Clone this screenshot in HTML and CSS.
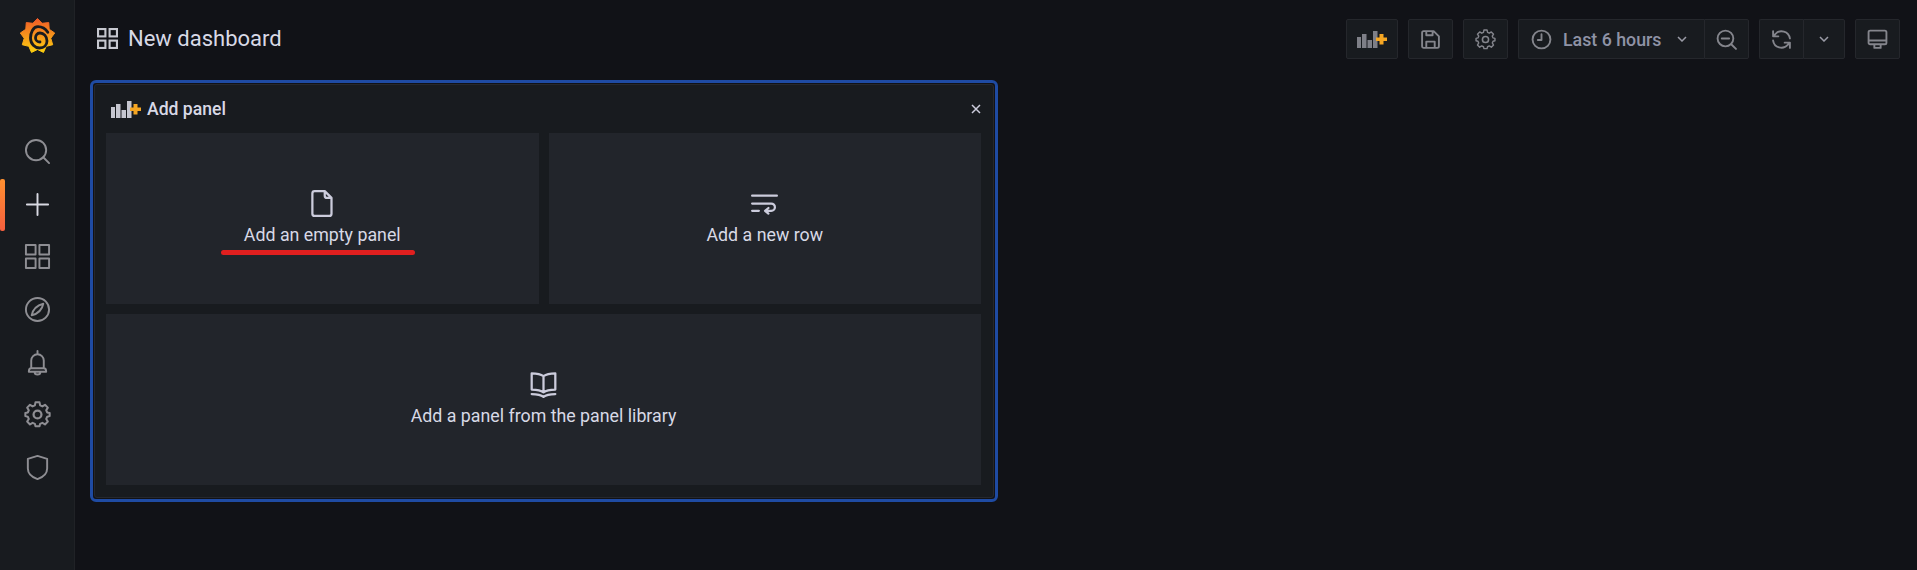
FILE: index.html
```html
<!DOCTYPE html>
<html lang="en">

<head>
    <meta charset="UTF-8">
    <meta name="viewport" content="width=device-width, initial-scale=1.0">
    <title>New dashboard - Grafana</title>
    <link rel="stylesheet" href="styles.css">
</head>

<body>
    <svg width="0" height="0" class="defs">
        <defs>
            <linearGradient id="logoGrad" x1="0" y1="1" x2="0" y2="0">
                <stop offset="0" stop-color="#fcd00f" />
                <stop offset="1" stop-color="#f05a28" />
            </linearGradient>
            <symbol id="addPanel" viewBox="0 0 30 17">
                <rect x="0" y="6" width="4" height="11" fill="currentColor" />
                <rect x="5" y="3" width="4.500" height="14" fill="currentColor" />
                <rect x="10.500" y="9" width="4.500" height="8" fill="currentColor" />
                <rect x="16" y="0" width="4.500" height="17" fill="currentColor" />
                <path d="M22.500 3h4v3.500H30v3.500h-3.500v3.500h-4V10H19V6.500h3.500z" fill="#f5a623" />
            </symbol>
            <symbol id="gear" viewBox="0 0 24 24">
                <path d="M10 2h4l.6 3 2.200 1 2.600-1.600 2.800 2.800L20.600 9.800l1 2.200 2.400.6v3l-2.400.6-1 2.200 1.600 2.600-2.800 2.800-2.600-1.600-2.200 1-.6 2.400h-4l-.6-2.400-2.200-1-2.600 1.600-2.800-2.800 1.600-2.600-1-2.200L0 15.600v-3l2.400-.6 1-2.200L1.800 7.200l2.800-2.800 2.600 1.600 2.200-1z" transform="translate(1.200 -.6) scale(.9)" />
                <circle cx="12" cy="12" r="3.500" />
            </symbol>
        </defs>
    </svg>

    <div class="app">
        <nav class="sidebar">
            <a class="logo" href="#">
                <svg width="35" height="36" viewBox="0 0 35 36">
                    <path fill="url(#logoGrad)" stroke="url(#logoGrad)" stroke-linejoin="round" d="M17.500 .5L22.100 5.300 28.750 4.600 29.200 11.250 34.700 15 30.800 20.300 32.700 26.750 26.200 28.300 23.500 34.400 17.500 31.500 11.500 34.400 8.800 28.300 2.300 26.750 4.200 20.300 .3 15 5.800 11.250 6.250 4.600 12.900 5.300z" />
                    <path fill="none" stroke="#181b1f" stroke-width="2.800" stroke-linecap="round" d="M27.800 14.300C25 10 21 8.700 18 8.700 13 8.700 10.500 15 10.500 20 10.500 26 15 30 19.500 30 24 30 27 27 27 23 27 18 23.500 15 20 15 17 15 15.500 17.500 15.500 20 15.500 22 17.500 24 20 24" />
                </svg>
            </a>
            <ul class="nav-list">
                <li>
                    <svg class="nav-icon" viewBox="0 0 28 28">
                        <circle cx="12.500" cy="12.500" r="10.500" />
                        <path d="M20 20l6 6" />
                    </svg>
                </li>
                <li class="current">
                    <svg class="nav-icon" viewBox="0 0 28 28">
                        <path d="M14 3v22M3 14h22" />
                    </svg>
                </li>
                <li>
                    <svg class="nav-icon" viewBox="0 0 28 28">
                        <rect x="2" y="2" width="10" height="10" />
                        <rect x="16" y="2" width="10" height="10" />
                        <rect x="2" y="16" width="10" height="10" />
                        <rect x="16" y="16" width="10" height="10" />
                    </svg>
                </li>
                <li>
                    <svg class="nav-icon" viewBox="0 0 28 28">
                        <circle cx="14" cy="14" r="12" />
                        <path d="M20 8c-1 5-4 10-12 12 1-5 4-10 12-12z" />
                    </svg>
                </li>
                <li>
                    <svg class="nav-icon" viewBox="0 0 28 28">
                        <path d="M14 2v3M7.500 20v-8a6.500 6.500 0 0 1 13 0v8M5 23.500c0-2 1-3.500 2.500-3.500h13c1.500 0 2.500 1.500 2.500 3.500zM11 23.500a3 3 0 0 0 6 0" />
                    </svg>
                </li>
                <li>
                    <svg class="nav-icon"><use href="#gear" /></svg>
                </li>
                <li>
                    <svg class="nav-icon" viewBox="0 0 28 28">
                        <path d="M14 2l10 3v10c0 5-4 9-10 11C8 24 4 20 4 15V5z" />
                    </svg>
                </li>
            </ul>
        </nav>

        <main class="main">
            <header class="topbar">
                <div class="title">
                    <svg class="title-icon" viewBox="0 0 20 20">
                        <rect x="1" y="1" width="7" height="7" />
                        <rect x="12" y="1" width="7" height="7" />
                        <rect x="1" y="12" width="7" height="7" />
                        <rect x="12" y="12" width="7" height="7" />
                    </svg>
                    <span>New dashboard</span>
                </div>
                <div class="toolbar">
                    <button class="btn btn-wide">
                        <svg class="add-icon add-icon-dim"><use href="#addPanel" /></svg>
                    </button>
                    <button class="btn">
                        <svg class="tool-icon" viewBox="0 0 20 20">
                            <path d="M2 3.500A1.500 1.500 0 0 1 3.500 2H13l5 5v9.500a1.500 1.500 0 0 1-1.500 1.500h-13A1.500 1.500 0 0 1 2 16.500zM6 18v-6h8v6M6 2v4h6V2" />
                        </svg>
                    </button>
                    <button class="btn">
                        <svg class="tool-icon"><use href="#gear" /></svg>
                    </button>
                    <div class="btn-group">
                        <button class="btn btn-time">
                            <svg class="tool-icon" viewBox="0 0 20 20">
                                <circle cx="10" cy="10" r="8.500" />
                                <path d="M10 5v5.500H6.500" />
                            </svg>
                            <span class="time-text">Last 6 hours</span>
                            <svg class="chevron" viewBox="0 0 10 6"><path d="M1 1l4 4 4-4" /></svg>
                        </button>
                        <button class="btn">
                            <svg class="tool-icon" viewBox="0 0 20 20">
                                <circle cx="9" cy="9" r="7.500" />
                                <path d="M5.500 9h7M15 15l4 4" />
                            </svg>
                        </button>
                    </div>
                    <div class="btn-group">
                        <button class="btn btn-refresh">
                            <svg class="tool-icon" viewBox="0 0 20 20">
                                <path d="M18 9a8 8 0 0 0-14-4L2 7M2 2v5h5M2 11a8 8 0 0 0 14 4l2-2M18 18v-5h-5" />
                            </svg>
                        </button>
                        <button class="btn btn-caret">
                            <svg class="chevron" viewBox="0 0 10 6"><path d="M1 1l4 4 4-4" /></svg>
                        </button>
                    </div>
                    <button class="btn">
                        <svg class="tool-icon" viewBox="0 0 20 20">
                            <path d="M3 1.500h14a1.500 1.500 0 0 1 1.500 1.500v10a1.500 1.500 0 0 1-1.500 1.500H3A1.500 1.500 0 0 1 1.500 13V3A1.500 1.500 0 0 1 3 1.500zM1.500 11h17M7 14.500v3.500h6v-3.500" />
                        </svg>
                    </button>
                </div>
            </header>

            <section class="add-panel">
                <div class="add-panel-inner">
                    <div class="add-panel-head">
                        <svg class="add-icon"><use href="#addPanel" /></svg>
                        <span>Add panel</span>
                        <svg class="close" viewBox="0 0 10 10"><path d="M1 1l8 8M9 1l-8 8" /></svg>
                    </div>
                    <div class="tiles">
                        <a class="tile" href="#">
                            <svg class="tile-icon" viewBox="0 0 24 24">
                                <path d="M5 1h9l6 6v14a2 2 0 0 1-2 2H5a2 2 0 0 1-2-2V3a2 2 0 0 1 2-2zM14 1v4a2 2 0 0 0 2 2h4" />
                            </svg>
                            <span class="tile-label">Add an empty panel</span>
                            <span class="mark"></span>
                        </a>
                        <a class="tile" href="#">
                            <svg class="tile-icon" viewBox="0 0 24 24">
                                <path d="M1 5h22M1 12h17a3.200 3.200 0 0 1 0 6.500h-5M15.500 16l-3 2.500 3 2.500M1 18.500h6" />
                            </svg>
                            <span class="tile-label">Add a new row</span>
                        </a>
                        <a class="tile tile-full" href="#">
                            <svg class="tile-icon" viewBox="0 0 24 24">
                                <path d="M12 4.500C10 3 6 2 1.500 2v14.500c4.500 0 8.500 .8 10.500 2.500 2-1.700 6-2.500 10.500-2.500V2C18 2 14 3 12 4.500zM12 4.500V19M1.500 20.500c4.500 0 8.500 .8 10.500 2.500 2-1.700 6-2.500 10.500-2.500" />
                            </svg>
                            <span class="tile-label">Add a panel from the panel library</span>
                        </a>
                    </div>
                </div>
            </section>
        </main>
    </div>
</body>

</html>
```

FILE: styles.css
```css
* {
    margin: 0;
    padding: 0;
    box-sizing: border-box;
}

html,
body {
    height: 100%;
    overflow: hidden;
}

body {
    background: #111217;
    color: #ccccdc;
    font-family: Roboto, "Liberation Sans", sans-serif;
    font-size: 17.5px;
}

a {
    color: unset;
    text-decoration: none;
}

.defs {
    position: absolute;
}

.app {
    display: flex;
    height: 100%;
}

/* left nav */
.sidebar {
    width: 75px;
    flex-shrink: 0;
    background: #181b1f;
    border-right: 1px solid #202226;
}

.logo {
    display: flex;
    justify-content: center;
    padding-top: 18px;
    height: 125px;
}

.nav-list {
    list-style: none;
}

.nav-list li {
    position: relative;
    height: 52.7px;
    display: flex;
    align-items: center;
    justify-content: center;
}

.nav-icon {
    width: 27px;
    height: 27px;
    fill: none;
    stroke: #8e8e93;
    stroke-width: 2;
    stroke-linejoin: round;
    stroke-linecap: round;
}

.current .nav-icon {
    stroke: #d8d9e2;
}

.current::before {
    content: "";
    position: absolute;
    left: 0;
    top: 1px;
    width: 5px;
    height: 52px;
    border-radius: 2px;
    background: linear-gradient(#ff9030, #f55f3e);
}

/* top bar */
.main {
    flex: 1;
    min-width: 0;
}

.topbar {
    display: flex;
    align-items: center;
    justify-content: space-between;
    height: 80px;
    padding: 0 17px 2px 22px;
}

.title {
    display: flex;
    align-items: center;
    gap: 10px;
    margin-bottom: 2px;
    font-size: 22px;
    color: #d8d9e6;
}

.title-icon {
    width: 21px;
    height: 21px;
    fill: none;
    stroke: #c7c8d0;
    stroke-width: 2;
}

.toolbar {
    display: flex;
    gap: 10px;
}

.btn-group {
    display: flex;
}

.btn-group .btn:first-child {
    border-radius: 2px 0 0 2px;
    border-right: 0;
}

.btn-group .btn:last-child {
    border-radius: 0 2px 2px 0;
}

.btn {
    display: flex;
    align-items: center;
    justify-content: center;
    width: 45px;
    height: 40px;
    background: #181b1f;
    border: 1px solid #25272c;
    border-radius: 2px;
    color: #8f93a6;
    font-family: inherit;
    font-size: 17.8px;
    font-weight: 500;
}

.btn-wide {
    width: 52px;
}

.btn-time {
    width: 186px;
    justify-content: flex-start;
    padding-left: 12px;
}

.time-text {
    margin: 0 15px 0 11px;
    white-space: nowrap;
}

.btn-refresh {
    width: 44px;
}

.btn-caret {
    width: 42px;
}

.tool-icon {
    width: 21px;
    height: 21px;
    flex-shrink: 0;
    fill: none;
    stroke: #84858c;
    stroke-width: 1.800;
    stroke-linejoin: round;
    stroke-linecap: round;
}

.chevron {
    width: 10px;
    height: 6px;
    flex-shrink: 0;
    fill: none;
    stroke: #9a9ba6;
    stroke-width: 1.500;
}

/* add panel */
.add-panel {
    width: 908px;
    margin-left: 15px;
    height: 422px;
    border: 3px solid #1f4ba3;
    border-radius: 6px;
}

.add-panel-inner {
    margin: 1px;
    height: calc(100% - 2px);
    padding: 0 12px 0 11px;
    background: #181b1f;
    border: 1px solid #26282d;
    border-radius: 3px;
}

.add-panel-head {
    display: flex;
    align-items: center;
    gap: 6px;
    height: 48px;
    padding-left: 5px;
    font-size: 17.6px;
    font-weight: 500;
    color: #d8d9e6;
}

.add-icon {
    width: 30px;
    height: 17px;
    color: #c5c6cf;
}

.add-icon-dim {
    color: #7e7f87;
}

.close {
    width: 10px;
    height: 10px;
    margin-left: auto;
    fill: none;
    stroke: #ccccdc;
    stroke-width: 1.500;
}

.tiles {
    display: grid;
    grid-template-columns: 1fr 1fr;
    grid-template-rows: 171px 171px;
    gap: 10px;
}

.tile {
    display: flex;
    flex-direction: column;
    align-items: center;
    justify-content: center;
    position: relative;
    padding-bottom: 2px;
    background: #22252b;
    color: #d8d9e6;
    font-size: 17.8px;
}

.tile-full {
    grid-column: 1 / 3;
}

.tile-icon {
    width: 27px;
    height: 27px;
    margin-bottom: 7px;
    fill: none;
    stroke: #ccccdc;
    stroke-width: 2;
    stroke-linejoin: round;
    stroke-linecap: round;
}

.mark {
    position: absolute;
    left: 115px;
    top: 117px;
    width: 194px;
    height: 5px;
    border-radius: 3px;
    background: #e01f1f;
}
```
